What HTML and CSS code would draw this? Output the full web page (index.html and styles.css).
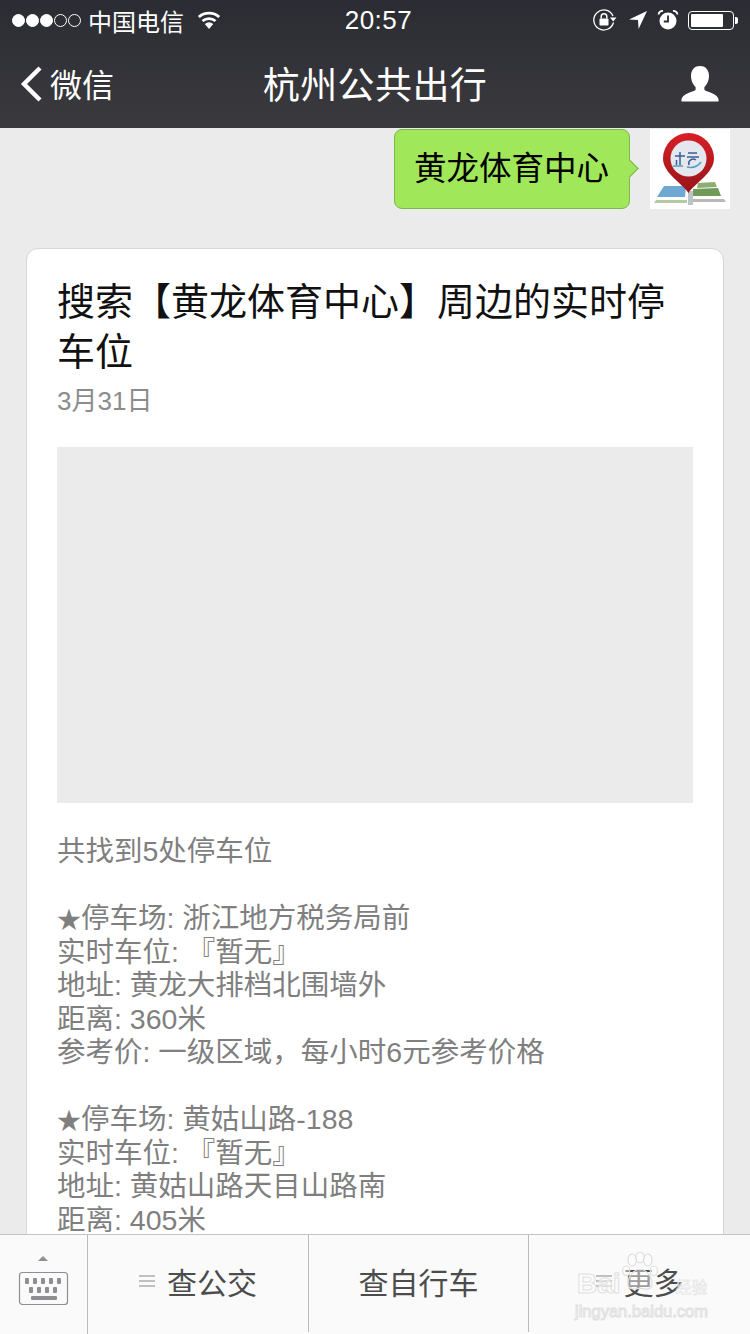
FILE: index.html
```html
<!DOCTYPE html>
<html lang="zh-CN">
<head>
    <meta charset="UTF-8">
    <meta name="viewport" content="width=device-width, initial-scale=1.0">
    <title>杭州公共出行</title>
    <link rel="stylesheet" href="styles.css">
</head>
<body>

<div class="phone">
  <header class="top">
    <div class="status">
      <div class="status-left">
        <span class="dots"><i class="on"></i><i class="on"></i><i class="on"></i><i></i><i></i></span>
        <span class="carrier">中国电信</span>
        <svg class="wifi" width="24" height="18" viewBox="0 0 24 18">
          <path d="M12 18 L7.800 13 A6.500 6.500 0 0 1 16.200 13 Z" fill="#fff"/>
          <path d="M5.500 10 A10 10 0 0 1 18.500 10" fill="none" stroke="#fff" stroke-width="2.800"/>
          <path d="M1.800 6 A15.500 15.500 0 0 1 22.200 6" fill="none" stroke="#fff" stroke-width="2.800"/>
        </svg>
      </div>
      <div class="clock">20:57</div>
      <div class="status-right">
        <svg class="lock" width="24" height="22" viewBox="0 0 24 22">
          <path d="M20.500 13.500 A10 10 0 1 1 20 7" fill="none" stroke="#fff" stroke-width="1.300"/>
          <path d="M17 8.500 L23.500 8.500 L20.200 12.500 Z" fill="#fff"/>
          <rect x="6.500" y="9.500" width="9" height="7" rx="1" fill="#fff"/>
          <path d="M8.200 9.500 V7.600 A2.800 2.800 0 0 1 13.800 7.600 V9.500" fill="none" stroke="#fff" stroke-width="1.500"/>
        </svg>
        <svg width="20" height="20" viewBox="0 0 20 20"><path d="M1 9.500 L19 1 L10.600 19 L10 10 Z" fill="#fff"/></svg>
        <svg width="22" height="22" viewBox="0 0 22 22">
          <circle cx="11" cy="12" r="8.500" fill="#fff"/>
          <path d="M11 6.500 V12.500 H6.800" fill="none" stroke="#2e2e33" stroke-width="1.800"/>
          <path d="M1.500 5.500 A4 4 0 0 1 6 2 M20.500 5.500 A4 4 0 0 0 16 2" fill="none" stroke="#fff" stroke-width="1.800"/>
        </svg>
        <div class="battery"><div class="battery-fill"></div></div>
        <div class="battery-tip"></div>
      </div>
    </div>
    <nav class="nav">
      <div class="back">
        <svg width="24" height="38" viewBox="0 0 24 38"><path d="M20 3 L4 19 L20 35" fill="none" stroke="#fff" stroke-width="4.400"/></svg>
        <span>微信</span>
      </div>
      <h1 class="nav-title">杭州公共出行</h1>
      <svg class="user" width="38" height="36" viewBox="0 0 38 36">
        <path d="M19 0 C12.500 0 10 5 10 10 C10 15 12.500 19 14.600 21 L14.600 24 C10 26.500 2 27.500 0.500 33 L0.500 35.500 L37.500 35.500 L37.500 33 C36 27.500 28 26.500 23.400 24 L23.400 21 C25.500 19 28 15 28 10 C28 5 25.500 0 19 0 Z" fill="#fff"/>
      </svg>
    </nav>
  </header>

  <main class="chat">
    <div class="msg">
      <div class="bubble">黄龙体育中心<span class="bubble-tip"></span></div>
      <div class="avatar">
        <svg width="80" height="80" viewBox="0 0 80 80">
          <defs>
            <linearGradient id="pin" x1="0" y1="0" x2="0" y2="1">
              <stop offset="0" stop-color="#d81f26"/>
              <stop offset="1" stop-color="#98141a"/>
            </linearGradient>
          </defs>
          <rect width="80" height="80" fill="#fff"/>
          <path d="M14 57 L36 57 L35 68 L7 68 Z" fill="#6fa8d2"/>
          <path d="M6 71 L37 71 L37 74 L4 74 Z" fill="#b6c9a4"/>
          <path d="M48 54 L65 53 L67 58 L47 59 Z" fill="#8cae70"/>
          <path d="M43 60 L68 59 L71 67 L43 67 Z" fill="#6f9a58"/>
          <path d="M43 70 L74 70 L76 73 L43 73 Z" fill="#b9b9b9"/>
          <rect x="38" y="62" width="5" height="14" fill="#bcc4c8"/>
          <path d="M38.500 64 C32 54 13 44 13 29.500 A25.500 25.500 0 1 1 64 29.500 C64 44 45 54 38.500 64 Z" fill="url(#pin)"/>
          <circle cx="38.500" cy="29.500" r="18" fill="#e4e7ee"/>
          <path d="M25 27 H35 M30 23 V36 M26.500 31 V36 M38 24 H47 M37 28 H49 M39 36 A4.500 4.500 0 0 1 46 31" fill="none" stroke="#3a5f96" stroke-width="1.500"/>
          <path d="M23 37 H33 M37 38 Q46 40 51 33" fill="none" stroke="#4f9fc0" stroke-width="1.500"/>
        </svg>
      </div>
    </div>

    <article class="card">
      <h2 class="card-title">搜索【黄龙体育中心】周边的实时停车位</h2>
      <div class="card-date">3月31日</div>
      <div class="card-img"></div>
      <div class="card-text">
        <p>共找到5处停车位</p>
        <p><span class="star">★</span>停车场: 浙江地方税务局前<br>实时车位: 『暂无』<br>地址: 黄龙大排档北围墙外<br>距离: 360米<br>参考价: 一级区域，每小时6元参考价格</p>
        <p><span class="star">★</span>停车场: 黄姑山路-188<br>实时车位: 『暂无』<br>地址: 黄姑山路天目山路南<br>距离: 405米</p>
      </div>
    </article>
  </main>

  <footer class="tabbar">
    <div class="tab-kb">
      <svg width="52" height="50" viewBox="0 0 52 50">
        <path d="M21 6 L26 1 L31 6 Z" fill="#8e8e93"/>
        <rect x="2.500" y="17.500" width="48" height="32" rx="3" fill="none" stroke="#8e8e93" stroke-width="1.200"/>
        <g fill="#8e8e93">
          <rect x="8" y="23" width="4" height="6" rx="1"/><rect x="16" y="23" width="4" height="6" rx="1"/><rect x="24" y="23" width="4" height="6" rx="1"/><rect x="32" y="23" width="4" height="6" rx="1"/><rect x="40" y="23" width="4" height="6" rx="1"/>
          <rect x="12" y="32" width="4" height="6" rx="1"/><rect x="20" y="32" width="4" height="6" rx="1"/><rect x="28" y="32" width="4" height="6" rx="1"/><rect x="36" y="32" width="4" height="6" rx="1"/>
          <rect x="14" y="41" width="26" height="4" rx="1"/>
        </g>
      </svg>
    </div>
    <div class="tab tab-a"><span class="burger"></span>查公交</div>
    <div class="tab tab-b">查自行车</div>
    <div class="tab tab-last"><span class="burger"></span>更多</div>
  </footer>

  <div class="watermark">
    <svg class="paw" width="36" height="40" viewBox="0 0 60 66">
      <g fill="rgba(255,255,255,.45)" stroke="#dedede" stroke-width="2">
        <ellipse cx="17" cy="13" rx="7" ry="10"/><ellipse cx="30" cy="9" rx="7" ry="9"/><ellipse cx="43" cy="13" rx="7" ry="10"/>
        <ellipse cx="7" cy="31" rx="6" ry="8"/><ellipse cx="53" cy="31" rx="6" ry="8"/>
        <path d="M10 52 C10 38 22 28 30 28 C38 28 50 38 50 52 C50 64 38 62 30 60 C22 62 10 64 10 52 Z"/>
      </g>
    </svg>
    <div class="wm-main">Bai<span class="wm-gap"></span><span class="wm-cn">经验</span></div>
    <div class="wm-sub">jingyan.baidu.com</div>
  </div>
</div>

</body>
</html>
```

FILE: styles.css
```css
* { box-sizing: border-box; }

html, body {
  margin: 0;
  padding: 0;
  height: 1334px;
  overflow: hidden;
}

body {
  font-family: "Liberation Sans", "Noto Sans CJK SC", sans-serif;
  background: #ebebeb;
}

.phone {
  position: relative;
  width: 750px;
  height: 1334px;
  overflow: hidden;
  display: flex;
  flex-direction: column;
}

/* barra superior */
.top {
  flex: none;
  height: 128px;
  background: linear-gradient(#2b2c33, #3a3a3e);
  color: #fff;
}

.status {
  height: 40px;
  display: grid;
  grid-template-columns: 1fr auto 1fr;
  align-items: center;
  padding: 0 12px;
}

.status-left { display: flex; align-items: center; }
.carrier { font-size: 24px; margin-left: 7px; }
.wifi { margin-left: 13px; }

.dots { display: flex; gap: 1px; }
.dots i {
  width: 13px;
  height: 13px;
  border-radius: 50%;
  border: 1px solid #fff;
}
.dots i.on { background: #fff; }

.clock {
  font-size: 26px;
  font-weight: 500;
  letter-spacing: 0.500px;
  margin-left: 7px;
}

.status-right {
  display: flex;
  align-items: center;
  justify-content: flex-end;
  gap: 9px;
}

.lock { margin-right: 2px; }

.battery {
  width: 46px;
  height: 19px;
  border: 1px solid #fff;
  border-radius: 4px;
  padding: 2px;
}
.battery-fill { width: 32px; height: 100%; background: #fff; border-radius: 1px; }
.battery-tip {
  width: 3px;
  height: 7px;
  margin-left: -8px;
  background: #fff;
  border-radius: 0 2px 2px 0;
}

.nav {
  height: 88px;
  display: grid;
  grid-template-columns: 1fr auto 1fr;
  align-items: center;
  padding: 0 31px;
}

.back {
  display: flex;
  align-items: center;
  gap: 6px;
  font-size: 32px;
  margin-left: -11px;
}

.back span { margin-bottom: 2px; }

.nav-title {
  margin: 0 0 3px;
  font-size: 37px;
  font-weight: 400;
  letter-spacing: 0.400px;
}

.user { justify-self: end; }

/* conversación */
.chat { flex: 1; min-height: 0; }

.msg {
  display: flex;
  justify-content: flex-end;
  gap: 20px;
  padding: 1px 20px 0 0;
}

.bubble {
  position: relative;
  width: 236px;
  height: 80px;
  background: #a0e75a;
  border: 1px solid #7cb84c;
  border-radius: 8px;
  font-size: 32.500px;
  line-height: 78px;
  padding-left: 19px;
  color: #000;
  white-space: nowrap;
}

.bubble-tip {
  position: absolute;
  right: -7px;
  top: 32px;
  width: 13px;
  height: 13px;
  background: #a0e75a;
  border-top: 1px solid #7cb84c;
  border-right: 1px solid #7cb84c;
  transform: rotate(45deg);
}

.avatar { width: 80px; height: 80px; }
.avatar svg { display: block; }

.card {
  margin: 39px 26px 0;
  padding: 28px 30px 0;
  background: #fff;
  border: 1px solid #d6d6d6;
  border-radius: 12px;
}

.card-title {
  margin: 0;
  font-size: 38px;
  line-height: 50px;
  font-weight: 400;
  color: #111;
}

.card-date {
  margin-top: 6px;
  font-size: 26px;
  line-height: 36px;
  color: #8c8c8c;
}

.card-img {
  height: 356px;
  margin-top: 28px;
  background: #ebebeb;
}

.card-text {
  margin-top: 32px;
  font-size: 28.500px;
  line-height: 33.500px;
  color: #7f7f7f;
}

.card-text p { margin: 0 0 33.500px; }

.star { font-size: 24px; line-height: 0; }

/* barra inferior */
.tabbar {
  position: absolute;
  left: 0;
  right: 0;
  bottom: 0;
  height: 100px;
  background: #fafafa;
  border-top: 1px solid #c4c4c4;
  display: flex;
  font-size: 30px;
  color: #4c4c4c;
}

.tab-kb {
  flex: none;
  width: 88px;
  border-right: 1px solid #bbb;
  padding: 20px 0 0 17px;
}

.tab {
  flex: none;
  height: 97px;
  padding-bottom: 5px;
  display: flex;
  align-items: center;
  justify-content: center;
  gap: 12px;
  border-right: 1px solid #bbb;
}

.tab-a { width: 221px; }
.tab-b { width: 220px; }
.tab-last { width: 221px; border-right: 0; }

.burger {
  width: 16px;
  height: 12px;
  border-top: 2px solid #c0c0c0;
  border-bottom: 2px solid #c0c0c0;
  position: relative;
}
.burger::after {
  content: "";
  position: absolute;
  left: 0;
  right: 0;
  top: 3px;
  height: 2px;
  background: #c0c0c0;
}

/* marca de agua */
.watermark {
  position: absolute;
  left: 575px;
  top: 1252px;
  width: 136px;
  height: 70px;
  color: rgba(255, 255, 255, 0.6);
  -webkit-text-stroke: 1px #e0e0e0;
}

.paw { position: absolute; left: 47px; top: 0; }

.wm-main {
  position: absolute;
  left: 2px;
  top: 15px;
  font-size: 28px;
  line-height: 34px;
  font-weight: 700;
  white-space: nowrap;
}

.wm-gap { display: inline-block; width: 55px; }

.wm-cn { font-size: 16px; font-weight: 400; -webkit-text-stroke-width: 0.500px; }

.wm-sub {
  position: absolute;
  left: 0;
  top: 48px;
  font-size: 16.500px;
  line-height: 22px;
  white-space: nowrap;
}
```
